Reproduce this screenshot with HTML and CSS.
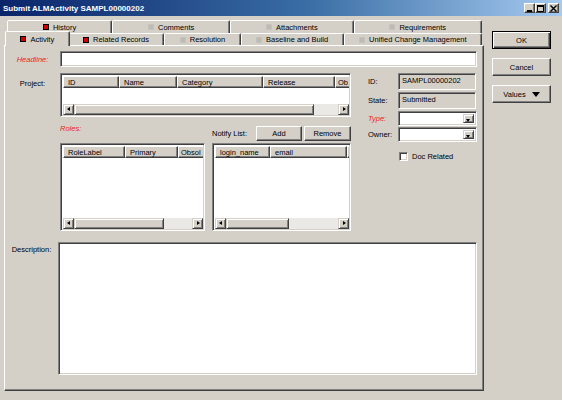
FILE: index.html
```html
<!DOCTYPE html>
<html lang="en">
<head>
    <meta charset="UTF-8">
    <title>Submit ALMActivity SAMPL00000202</title>
    <link rel="stylesheet" href="styles.css">
</head>
<body>
    <div class="titlebar">
        <span class="title">Submit ALMActivity SAMPL00000202</span>
        <div class="winbtns">
            <span class="winbtn">
                <svg width="7" height="7" viewBox="0 0 7 7"><rect x="1" y="5" width="5" height="2" fill="#000"/></svg>
            </span>
            <span class="winbtn">
                <svg width="7" height="7" viewBox="0 0 7 7"><path d="M0.5 0.5h6v6h-6z" fill="none" stroke="#000"/><rect x="0" y="0" width="7" height="2" fill="#000"/></svg>
            </span>
            <span class="winbtn close">
                <svg width="7" height="7" viewBox="0 0 7 7"><path d="M0.5 0.5l6 6M6.5 0.5l-6 6" stroke="#000" stroke-width="1.4"/></svg>
            </span>
        </div>
    </div>

    <div class="main">
        <div class="tabarea">
            <div class="tabrow back">
                <div class="tab"><span class="ico"></span>History</div>
                <div class="tab"><span class="ico off"></span>Comments</div>
                <div class="tab"><span class="ico off"></span>Attachments</div>
                <div class="tab"><span class="ico off"></span>Requirements</div>
            </div>
            <div class="tabrow front">
                <div class="tab active"><span class="ico"></span>Activity</div>
                <div class="tab"><span class="ico"></span>Related Records</div>
                <div class="tab"><span class="ico off"></span>Resolution</div>
                <div class="tab"><span class="ico off"></span>Baseline and Build</div>
                <div class="tab"><span class="ico off"></span>Unified Change Management</div>
            </div>

            <div class="panel">
                <div class="row headline-row">
                    <label class="lbl req">Headline:</label>
                    <div class="field headline"></div>
                </div>

                <div class="mid">
                    <label class="lbl project-lbl">Project:</label>
                    <div class="midblock">
                        <div class="grid project">
                            <div class="ghead">
                                <div class="gcol w56">ID</div>
                                <div class="gcol w58">Name</div>
                                <div class="gcol w86">Category</div>
                                <div class="gcol w72">Release</div>
                                <div class="gcol rest">Ob</div>
                            </div>
                            <div class="gbody"></div>
                            <div class="hscroll">
                                <span class="sbtn left"></span>
                                <span class="thumb t240"></span>
                                <span class="track"></span>
                                <span class="sbtn right"></span>
                            </div>
                        </div>

                        <div class="rolesrow">
                            <span class="roles-lbl req">Roles:</span>
                            <div class="notify-bar">
                                <span class="notify-lbl">Notify List:</span>
                                <button class="btn add">Add</button>
                                <button class="btn remove">Remove</button>
                            </div>
                        </div>

                        <div class="tables">
                            <div class="grid roles">
                                <div class="ghead">
                                    <div class="gcol w62">RoleLabel</div>
                                    <div class="gcol w53">Primary</div>
                                    <div class="gcol rest">Obsol</div>
                                </div>
                                <div class="gbody"></div>
                                <div class="hscroll">
                                    <span class="sbtn left"></span>
                                    <span class="thumb t90"></span>
                                    <span class="track"></span>
                                    <span class="sbtn right"></span>
                                </div>
                            </div>
                            <div class="grid notify">
                                <div class="ghead">
                                    <div class="gcol w55">login_name</div>
                                    <div class="gcol w77">email</div>
                                    <div class="gcol rest"></div>
                                </div>
                                <div class="gbody"></div>
                                <div class="hscroll">
                                    <span class="sbtn left"></span>
                                    <span class="thumb t63"></span>
                                    <span class="track"></span>
                                    <span class="sbtn right"></span>
                                </div>
                            </div>
                        </div>
                    </div>

                    <div class="rightblock">
                        <div class="prop tall">
                            <span class="plbl">ID:</span>
                            <div class="field ro">SAMPL00000202</div>
                        </div>
                        <div class="prop tall">
                            <span class="plbl">State:</span>
                            <div class="field ro">Submitted</div>
                        </div>
                        <div class="prop">
                            <span class="plbl req">Type:</span>
                            <div class="field combo"><span class="dropbtn"></span></div>
                        </div>
                        <div class="prop">
                            <span class="plbl">Owner:</span>
                            <div class="field combo"><span class="dropbtn"></span></div>
                        </div>
                        <div class="check">
                            <span class="box"></span>
                            <span>Doc Related</span>
                        </div>
                    </div>
                </div>

                <div class="row desc-row">
                    <label class="lbl desc-lbl">Description:</label>
                    <div class="field description"></div>
                </div>
            </div>
        </div>

        <div class="side">
            <button class="btn big default">OK</button>
            <button class="btn big">Cancel</button>
            <button class="btn big values">Values <span class="caret"></span></button>
        </div>
    </div>
</body>
</html>
```

FILE: styles.css
```css
* {
    box-sizing: border-box;
}

body {
    margin: 0;
    width: 562px;
    height: 400px;
    overflow: hidden;
    background-color: #d4d0c8;
    font-family: "Liberation Sans", Arial, sans-serif;
    font-size: 7.5px;
    line-height: 9px;
    color: #000;
}

/* title bar */
.titlebar {
    height: 16px;
    display: flex;
    align-items: center;
    padding: 0 3px;
    background: linear-gradient(to right, #0a246a, #3a6ea5 55%, #a6caf0);
}

.title {
    flex: 1;
    color: #fff;
    font-weight: bold;
    font-size: 8px;
}

.winbtns {
    display: flex;
}

.winbtn {
    width: 11px;
    height: 10px;
    display: flex;
    align-items: center;
    justify-content: center;
    background-color: #d4d0c8;
    border: 1px solid;
    border-color: #fff #404040 #404040 #fff;
    box-shadow: inset -1px -1px #808080;
}

.winbtn.close {
    margin-left: 2px;
}

/* layout */
.main {
    display: flex;
    padding-top: 4px;
}

.tabarea {
    margin-left: 4px;
    width: 480px;
}

/* tabs */
.tabrow {
    display: flex;
    padding: 0 2px 0 3px;
}

.tab {
    flex: 1 1 auto;
    display: flex;
    align-items: center;
    justify-content: center;
    gap: 4px;
    padding: 0 5px;
    white-space: nowrap;
    background-color: #d4d0c8;
    border: 1px solid;
    border-bottom: none;
    border-color: #fff #404040 transparent #fff;
    border-radius: 2px 2px 0 0;
    box-shadow: inset -1px 0 #808080;
}

.back .tab {
    height: 13px;
}

.front .tab {
    height: 12px;
}

.front .tab.active {
    height: 15px;
    margin: -2px -2px -1px;
    position: relative;
    z-index: 1;
}

.ico {
    width: 6px;
    height: 6px;
    background-color: #d00000;
    border: 1px solid #000;
}

.ico.off {
    background-color: #bebbb4;
    border-color: #c6c3bc;
}

/* tab panel */
.panel {
    height: 346px;
    padding-top: 5px;
    border: 1px solid;
    border-color: #fff #404040 #404040 #fff;
    box-shadow: inset -1px -1px #808080;
}

.row {
    display: flex;
}

.lbl {
    width: 55px;
    flex: none;
    text-align: center;
}

.req {
    color: #f0202a;
    font-style: italic;
}

.headline-row {
    align-items: center;
}

.field {
    background-color: #fff;
    border: 1px solid;
    border-color: #808080 #fff #fff #808080;
    box-shadow: inset 1px 1px #404040, inset -1px -1px #d4d0c8;
}

.headline {
    width: 417px;
    height: 16px;
}

.mid {
    display: flex;
    margin-top: 6px;
}

.project-lbl {
    padding-top: 6px;
}

.midblock {
    width: 291px;
    display: flex;
    flex-direction: column;
}

/* list views */
.grid {
    display: flex;
    flex-direction: column;
    overflow: hidden;
    padding: 2px 1px 1px 2px;
    background-color: #fff;
    border: 1px solid;
    border-color: #808080 #fff #fff #808080;
    box-shadow: inset 1px 1px #404040, inset -1px -1px #d4d0c8;
}

.project {
    height: 44px;
}

.ghead {
    display: flex;
    height: 12px;
    flex: none;
    overflow: hidden;
}

.gcol {
    flex: none;
    padding: 1px 0 0 4px;
    overflow: hidden;
    white-space: nowrap;
    background-color: #d4d0c8;
    border: 1px solid;
    border-color: #fff #404040 #404040 #fff;
    box-shadow: inset -1px -1px #808080;
}

.gcol.rest {
    flex: 1 1 auto;
    padding-left: 2px;
    border-right: none;
    box-shadow: inset 0 -1px #808080;
}

.w53 { width: 53px; }
.w55 { width: 55px; }
.w56 { width: 56px; }
.w58 { width: 58px; }
.w62 { width: 62px; }
.w72 { width: 72px; }
.w77 { width: 77px; }
.w86 { width: 86px; }

.gbody {
    flex: 1;
}

.hscroll {
    display: flex;
    height: 11px;
    flex: none;
}

.sbtn,
.thumb {
    flex: none;
    background-color: #d4d0c8;
    border: 1px solid;
    border-color: #d4d0c8 #404040 #404040 #d4d0c8;
    box-shadow: inset 1px 1px #fff, inset -1px -1px #808080;
}

.sbtn {
    width: 11px;
    position: relative;
}

.sbtn::after {
    content: "";
    position: absolute;
    top: 2px;
    border-top: 2.5px solid transparent;
    border-bottom: 2.5px solid transparent;
}

.sbtn.left::after {
    left: 3px;
    border-right: 3px solid #000;
}

.sbtn.right::after {
    left: 4px;
    border-left: 3px solid #000;
}

.t240 { width: 240px; }
.t90 { width: 90px; }
.t63 { width: 63px; }

.track {
    flex: 1;
    background-color: #ebe9e5;
}

/* roles / notify bar */
.rolesrow {
    display: flex;
    height: 26px;
}

.roles-lbl {
    width: 152px;
    padding-top: 7px;
}

.notify-bar {
    flex: 1;
    display: flex;
    align-items: center;
    padding-top: 9px;
    height: 24px;
}

.notify-lbl {
    width: 44px;
}

.btn {
    font-family: inherit;
    font-size: 7.5px;
    line-height: 9px;
    color: #000;
    padding: 0;
    background-color: #d4d0c8;
    border: 1px solid;
    border-color: #fff #404040 #404040 #fff;
    box-shadow: inset -1px -1px #808080;
}

.add {
    width: 46px;
    height: 15px;
    margin-right: 2px;
}

.remove {
    width: 47px;
    height: 15px;
}

.tables {
    display: flex;
    gap: 7px;
}

.roles {
    width: 145px;
    height: 88px;
}

.notify {
    width: 139px;
    height: 88px;
}

/* right column */
.rightblock {
    width: 109px;
    margin-left: 17px;
}

.prop {
    display: flex;
    align-items: center;
    margin-bottom: 1px;
}

.prop.tall {
    margin-bottom: 2px;
}

.plbl {
    width: 30px;
    flex: none;
}

.field.ro {
    width: 78px;
    height: 17px;
    padding: 2px 0 0 3px;
    background-color: #d4d0c8;
    white-space: nowrap;
}

.field.combo {
    width: 79px;
    height: 15px;
    display: flex;
    justify-content: flex-end;
    padding: 2px;
}

.dropbtn {
    width: 11px;
    position: relative;
    background-color: #d4d0c8;
    border: 1px solid;
    border-color: #d4d0c8 #404040 #404040 #d4d0c8;
    box-shadow: inset 1px 1px #fff, inset -1px -1px #808080;
}

.dropbtn::after {
    content: "";
    position: absolute;
    left: 2px;
    top: 4px;
    border-left: 2.5px solid transparent;
    border-right: 2.5px solid transparent;
    border-top: 3px solid #000;
}

.check {
    display: flex;
    align-items: center;
    gap: 4px;
    margin-top: 10px;
    padding-left: 31px;
}

.box {
    width: 9px;
    height: 9px;
    background-color: #fff;
    border: 1px solid;
    border-color: #808080 #fff #fff #808080;
    box-shadow: inset 1px 1px #404040, inset -1px -1px #d4d0c8;
}

/* description */
.desc-row {
    margin-top: 11px;
}

.desc-lbl {
    width: 53px;
    padding-top: 3px;
}

.description {
    width: 419px;
    height: 133px;
}

/* dialog buttons */
.side {
    width: 59px;
    margin-left: 8px;
    margin-top: 11px;
    display: flex;
    flex-direction: column;
    gap: 9px;
}

.btn.big {
    height: 18px;
}

.btn.default {
    border: 1px solid #000;
    box-shadow: inset 1px 1px #fff, inset -1px -1px #404040, inset -2px -2px #808080;
}

.values {
    display: flex;
    align-items: center;
    justify-content: center;
    gap: 6px;
}

.caret {
    border-left: 4px solid transparent;
    border-right: 4px solid transparent;
    border-top: 5px solid #000;
}
```
